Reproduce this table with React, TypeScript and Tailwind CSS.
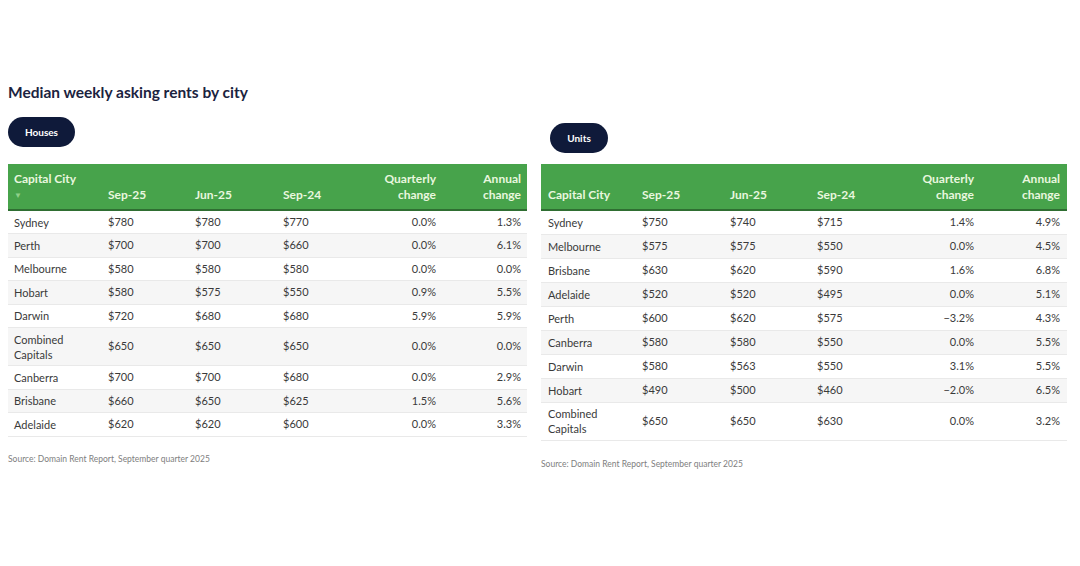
type Row = { city: string[]; a: string; b: string; c: string; q: string; y: string };

const houses: Row[] = [
  { city: ["Sydney"], a: "$780", b: "$780", c: "$770", q: "0.0%", y: "1.3%" },
  { city: ["Perth"], a: "$700", b: "$700", c: "$660", q: "0.0%", y: "6.1%" },
  { city: ["Melbourne"], a: "$580", b: "$580", c: "$580", q: "0.0%", y: "0.0%" },
  { city: ["Hobart"], a: "$580", b: "$575", c: "$550", q: "0.9%", y: "5.5%" },
  { city: ["Darwin"], a: "$720", b: "$680", c: "$680", q: "5.9%", y: "5.9%" },
  { city: ["Combined", "Capitals"], a: "$650", b: "$650", c: "$650", q: "0.0%", y: "0.0%" },
  { city: ["Canberra"], a: "$700", b: "$700", c: "$680", q: "0.0%", y: "2.9%" },
  { city: ["Brisbane"], a: "$660", b: "$650", c: "$625", q: "1.5%", y: "5.6%" },
  { city: ["Adelaide"], a: "$620", b: "$620", c: "$600", q: "0.0%", y: "3.3%" },
];

const units: Row[] = [
  { city: ["Sydney"], a: "$750", b: "$740", c: "$715", q: "1.4%", y: "4.9%" },
  { city: ["Melbourne"], a: "$575", b: "$575", c: "$550", q: "0.0%", y: "4.5%" },
  { city: ["Brisbane"], a: "$630", b: "$620", c: "$590", q: "1.6%", y: "6.8%" },
  { city: ["Adelaide"], a: "$520", b: "$520", c: "$495", q: "0.0%", y: "5.1%" },
  { city: ["Perth"], a: "$600", b: "$620", c: "$575", q: "−3.2%", y: "4.3%" },
  { city: ["Canberra"], a: "$580", b: "$580", c: "$550", q: "0.0%", y: "5.5%" },
  { city: ["Darwin"], a: "$580", b: "$563", c: "$550", q: "3.1%", y: "5.5%" },
  { city: ["Hobart"], a: "$490", b: "$500", c: "$460", q: "−2.0%", y: "6.5%" },
  { city: ["Combined", "Capitals"], a: "$650", b: "$650", c: "$630", q: "0.0%", y: "3.2%" },
];

function RentTable({
  rows,
  widths,
  pad,
  rowH,
  sortArrow,
}: {
  rows: Row[];
  widths: string[];
  pad: string;
  rowH: string;
  sortArrow?: boolean;
}) {
  return (
    <table className="w-full table-fixed border-collapse text-[11px] text-[#3a3a3a]">
      <colgroup>
        {widths.map((w, i) => (
          <col key={i} className={w} />
        ))}
      </colgroup>
      <thead>
        <tr className="h-[46px] bg-[#47a34b] border-b-2 border-[#2f6e32] text-[12px] font-bold leading-[16px] text-[#e9f7df]">
          <th className={`${pad} text-left align-bottom pb-[6px] font-bold`}>
            {sortArrow ? (
              <div className="flex flex-col">
                <span>Capital City</span>
                <span className="text-[8px] leading-[16px] text-[#8fd08a]">▼</span>
              </div>
            ) : (
              <span>Capital City</span>
            )}
          </th>
          <th className="text-left align-bottom pb-[6px] pl-[6px] font-bold">Sep-25</th>
          <th className="text-left align-bottom pb-[6px] pl-[6px] font-bold">Jun-25</th>
          <th className="text-left align-bottom pb-[6px] pl-[6px] font-bold">Sep-24</th>
          <th className="text-right align-bottom pb-[6px] pr-[6px] font-bold">
            Quarterly
            <br />
            change
          </th>
          <th className={`${pad} text-right align-bottom pb-[6px] font-bold`}>
            Annual
            <br />
            change
          </th>
        </tr>
      </thead>
      <tbody>
        {rows.map((r, i) => (
          <tr
            key={i}
            className={`${r.city.length > 1 ? "h-[38px]" : rowH} border-b border-[#e9e9e9] ${
              i % 2 === 1 ? "bg-[#f6f6f6]" : "bg-white"
            }`}
          >
            <td className={`${pad} text-left leading-[15px]`}>
              {r.city.map((c) => (
                <div key={c}>{c}</div>
              ))}
            </td>
            <td className="pl-[6px]">{r.a}</td>
            <td className="pl-[6px]">{r.b}</td>
            <td className="pl-[6px]">{r.c}</td>
            <td className="pr-[6px] text-right">{r.q}</td>
            <td className={`${pad} text-right`}>{r.y}</td>
          </tr>
        ))}
      </tbody>
    </table>
  );
}

export default function App() {
  return (
    <div className="w-[1080px] h-[566px] bg-white font-['Lato','Open_Sans',sans-serif] px-[8px] pt-[83px]">
      <h2 className="text-[15.5px] font-bold leading-[18px] text-[#1b2340]">
        Median weekly asking rents by city
      </h2>
      <div className="flex gap-[14px]">
        <div className="w-[519px]">
          <div className="mt-[16px] mb-[17px] flex">
            <span className="flex h-[30px] w-[67px] items-center justify-center rounded-[15px] bg-[#0f1a3a] text-[10px] font-bold text-white">
              Houses
            </span>
          </div>
          <RentTable
            rows={houses}
            widths={["w-[94px]", "w-[87px]", "w-[88px]", "w-[80px]", "w-[85px]", "w-[85px]"]}
            pad="px-[6px]"
            rowH="h-[23.5px]"
            sortArrow
          />
          <p className="mt-[16px] text-[8.5px] text-[#808080]">
            Source: Domain Rent Report, September quarter 2025
          </p>
        </div>
        <div className="w-[526px]">
          <div className="mt-[22px] mb-[11px] flex pl-[9px]">
            <span className="flex h-[30px] w-[58px] items-center justify-center rounded-[15px] bg-[#0f1a3a] text-[10px] font-bold text-white">
              Units
            </span>
          </div>
          <RentTable
            rows={units}
            widths={["w-[95px]", "w-[88px]", "w-[87px]", "w-[84px]", "w-[85px]", "w-[87px]"]}
            pad="px-[7px]"
            rowH="h-[24px]"
          />
          <p className="mt-[17px] text-[8.5px] text-[#808080]">
            Source: Domain Rent Report, September quarter 2025
          </p>
        </div>
      </div>
    </div>
  );
}
